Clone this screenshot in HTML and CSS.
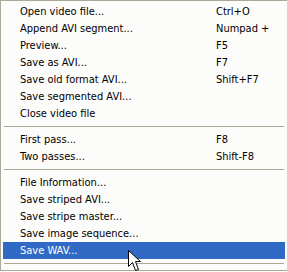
FILE: index.html
```html
<!DOCTYPE html>
<html lang="en">

<head>
    <meta charset="UTF-8">
    <title>File menu</title>
    <link rel="stylesheet" href="styles.css">
</head>

<body>

    <!-- File menu popup -->
    <div class="menu">
        <div class="item"><span class="label">Open video file...</span><span class="key">Ctrl+O</span></div>
        <div class="item"><span class="label">Append AVI segment...</span><span class="key">Numpad +</span></div>
        <div class="item"><span class="label">Preview...</span><span class="key">F5</span></div>
        <div class="item"><span class="label">Save as AVI...</span><span class="key">F7</span></div>
        <div class="item"><span class="label">Save old format AVI...</span><span class="key">Shift+F7</span></div>
        <div class="item"><span class="label">Save segmented AVI...</span><span class="key"></span></div>
        <div class="item"><span class="label">Close video file</span><span class="key"></span></div>
        <div class="separator"></div>
        <div class="item"><span class="label">First pass...</span><span class="key">F8</span></div>
        <div class="item"><span class="label">Two passes...</span><span class="key">Shift-F8</span></div>
        <div class="separator"></div>
        <div class="item"><span class="label">File Information...</span><span class="key"></span></div>
        <div class="item"><span class="label">Save striped AVI...</span><span class="key"></span></div>
        <div class="item"><span class="label">Save stripe master...</span><span class="key"></span></div>
        <div class="item"><span class="label">Save image sequence...</span><span class="key"></span></div>
        <div class="item selected"><span class="label">Save WAV...</span><span class="key"></span></div>
        <div class="separator"></div>
    </div>

    <!-- Mouse pointer -->
    <svg class="cursor" width="13" height="22" viewBox="0 0 13 22">
        <path d="M0.5 0.5 L0.5 16.5 L4.5 12.5 L7.5 20.5 L10.5 19.5 L7.5 11.5 L12.5 11.5 Z" fill="#ffffff" stroke="#000000" stroke-width="1" stroke-linejoin="miter" />
    </svg>

</body>

</html>
```

FILE: styles.css
```css
body {
    margin: 0;
    padding: 0;
    width: 287px;
    height: 272px;
    overflow: hidden;
    position: relative;
    background: #fcfcfa;
    font-family: "DejaVu Sans Condensed", "DejaVu Sans", sans-serif;
    font-size: 11px;
    color: #000;
}

.menu {
    width: 282px;
    padding: 2px;
    border: 1px solid #aca899;
    background: #fcfcfa;
}

.item {
    display: flex;
    height: 17px;
    line-height: 17px;
    padding-left: 17px;
    white-space: nowrap;
}

.item .label {
    width: 196px;
}

.item.selected {
    background: #316ac5;
    color: #fff;
}

.separator {
    height: 9px;
    display: flex;
    align-items: center;
    padding: 0 1px;
}

.separator::before {
    content: "";
    flex: 1;
    height: 1px;
    background: #aca899;
}

.cursor {
    position: absolute;
    left: 128px;
    top: 250px;
}
```
